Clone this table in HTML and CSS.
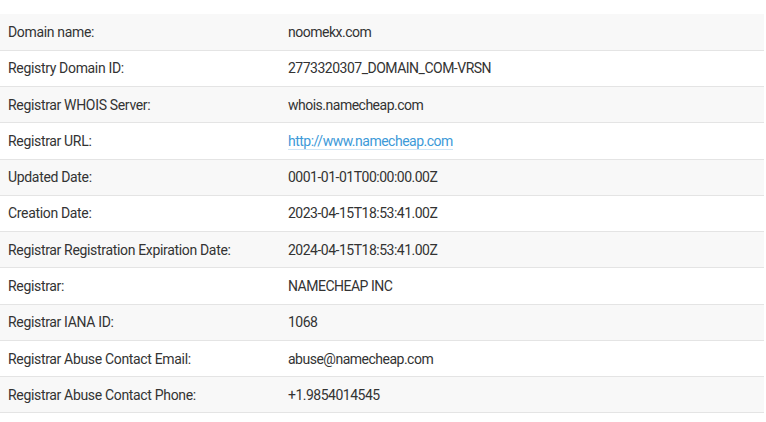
FILE: index.html
```html
<!DOCTYPE html>
<html lang="en">
<head>
<meta charset="utf-8">
<title>WHOIS</title>
<link rel="stylesheet" href="styles.css">
</head>
<body>
<table class="whois">
  <tbody>
    <tr><td class="label">Domain name:</td><td class="value">noomekx.com</td></tr>
    <tr><td class="label">Registry Domain ID:</td><td class="value">2773320307_DOMAIN_COM-VRSN</td></tr>
    <tr><td class="label">Registrar WHOIS Server:</td><td class="value">whois.namecheap.com</td></tr>
    <tr><td class="label">Registrar URL:</td><td class="value"><a class="link" href="#">http://www.namecheap.com</a></td></tr>
    <tr><td class="label">Updated Date:</td><td class="value">0001-01-01T00:00:00.00Z</td></tr>
    <tr><td class="label">Creation Date:</td><td class="value">2023-04-15T18:53:41.00Z</td></tr>
    <tr><td class="label">Registrar Registration Expiration Date:</td><td class="value">2024-04-15T18:53:41.00Z</td></tr>
    <tr><td class="label">Registrar:</td><td class="value">NAMECHEAP INC</td></tr>
    <tr><td class="label">Registrar IANA ID:</td><td class="value">1068</td></tr>
    <tr><td class="label">Registrar Abuse Contact Email:</td><td class="value">abuse@namecheap.com</td></tr>
    <tr><td class="label">Registrar Abuse Contact Phone:</td><td class="value">+1.9854014545</td></tr>
  </tbody>
</table>
</body>
</html>
```
FILE: styles.css
```css
html, body {
  margin: 0;
  padding: 0;
  background: #ffffff;
}
body {
  padding-top: 14px;
  font-family: Roboto, "Liberation Sans", sans-serif;
  font-size: 14px;
  color: #333333;
}
.whois {
  width: 764px;
  border-collapse: collapse;
  border-spacing: 0;
}
.whois tr:nth-child(odd) {
  background: #f8f8f8;
}
.whois td {
  height: 36.27px;
  padding: 0 8px;
  border-bottom: 1px solid #e4e4e4;
  vertical-align: middle;
  line-height: 20px;
  letter-spacing: -0.33px;
  box-sizing: border-box;
}
.whois .label {
  width: 280px;
}
.whois .value {
  letter-spacing: -0.5px;
}
.link {
  color: #3d9ad8;
  text-decoration: none;
  border-bottom: 1px solid #cfe6f6;
}
```
